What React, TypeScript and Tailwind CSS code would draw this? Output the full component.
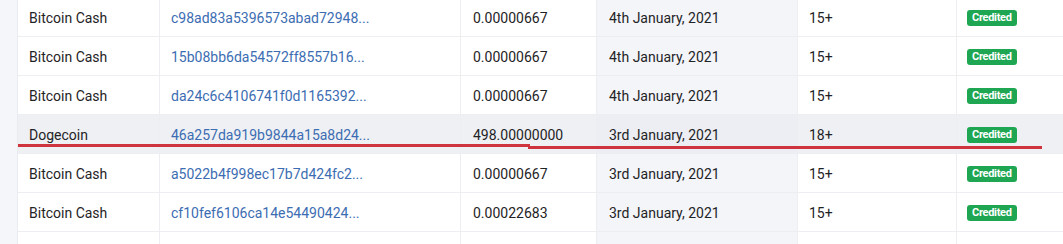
const rows = [
  { coin: "Bitcoin Cash", hash: "c98ad83a5396573abad72948...", amount: "0.00000667", date: "4th January, 2021", conf: "15+" },
  { coin: "Bitcoin Cash", hash: "15b08bb6da54572ff8557b16...", amount: "0.00000667", date: "4th January, 2021", conf: "15+" },
  { coin: "Bitcoin Cash", hash: "da24c6c4106741f0d1165392...", amount: "0.00000667", date: "4th January, 2021", conf: "15+" },
  { coin: "Dogecoin", hash: "46a257da919b9844a15a8d24...", amount: "498.00000000", date: "3rd January, 2021", conf: "18+", hl: true },
  { coin: "Bitcoin Cash", hash: "a5022b4f998ec17b7d424fc2...", amount: "0.00000667", date: "3rd January, 2021", conf: "15+" },
  { coin: "Bitcoin Cash", hash: "cf10fef6106ca14e54490424...", amount: "0.00022683", date: "3rd January, 2021", conf: "15+" },
];

const cell = "flex items-center border-r border-[#eceef2] pl-[11px] pt-[2px]";

export default function App() {
  return (
    <div className="flex h-[244px] w-[1063px] overflow-hidden bg-[#f4f6fa] font-['Roboto','Liberation_Sans',sans-serif] text-[14px] text-[#1f2326]">
      <div className="w-[18px] shrink-0 border-r border-[#e8ebf0]" />
      <div className="relative flex-1 bg-white">
        <div className="-mt-[2px] flex flex-col">
          {rows.map((r, i) => (
            <div
              key={i}
              className={`grid h-[39px] grid-cols-[142px_301px_136px_201px_159px_1fr] border-b border-[#eceef2] ${
                r.hl ? "bg-[#eef0f4]" : ""
              }`}
            >
              <div className={cell}>{r.coin}</div>
              <div className={`${cell} text-[#3c6db2]`}>{r.hash}</div>
              <div className={`${cell} pl-[12px]`}>{r.amount}</div>
              <div className={`${cell} pl-[12px] ${r.hl ? "bg-[#eceef3]" : "bg-[#f3f5f9]"}`}>{r.date}</div>
              <div className={`${cell} pl-[10px]`}>{r.conf}</div>
              <div className="flex items-center pl-[10px] pt-[2px]">
                <span className="rounded-[3px] bg-[#1fa653] px-[5px] py-[1px] text-[11px] font-bold leading-[14px] tracking-[-0.3px] text-white">
                  Credited
                </span>
              </div>
            </div>
          ))}
          <div className="grid h-[39px] grid-cols-[142px_301px_136px_201px_159px_1fr]">
            <div className={cell} />
            <div className={cell} />
            <div className={cell} />
            <div className={`${cell} bg-[#f3f5f9]`} />
            <div className={cell} />
            <div />
          </div>
        </div>
        {/* red annotation line */}
        <div className="absolute left-0 top-[144px] h-[3px] w-[512px] bg-[#cf333e]" />
        <div className="absolute left-[510px] top-[146px] h-[3px] w-[514px] bg-[#cf333e]" />
      </div>
    </div>
  );
}
